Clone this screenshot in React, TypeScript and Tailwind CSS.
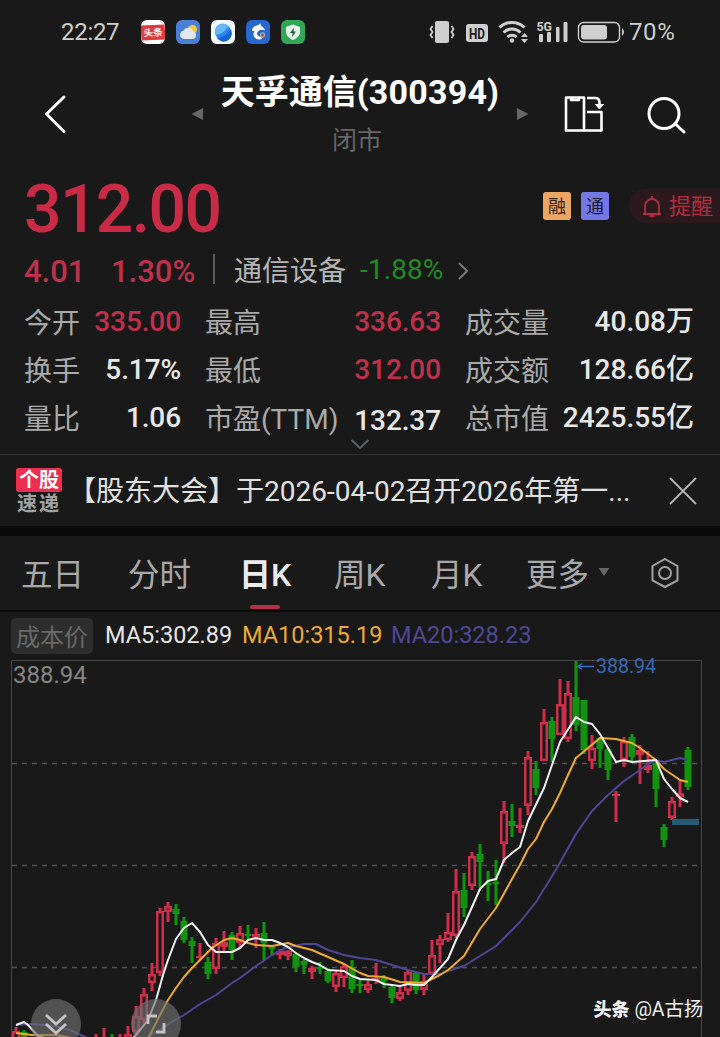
import React from 'react';

type Candle = [color: 'r' | 'g', high: number, top: number, bottom: number, low: number];

// one candle every 8px, the first one sits at x = 16
const leftCandles: Candle[] = [
  ['r', 1027, 1031, 1040, 1042], ['g', 1030, 1032, 1040, 1042],
];

const candles: Candle[] = [
  ['r', 1034, 1040, 1044, 1046], ['r', 1028, 1040, 1044, 1046], ['g', 1034, 1040, 1044, 1046],
  ['r', 1034, 1040, 1044, 1046], ['r', 1026, 1034, 1040, 1044], ['r', 1006, 1016, 1032, 1036],
  ['r', 988, 994, 1020, 1024], ['r', 963, 974, 983, 991], ['r', 908, 911, 973, 976],
  ['r', 902, 906, 912, 922], ['g', 904, 909, 914, 925], ['g', 917, 921, 940, 943],
  ['g', 937, 941, 946, 963], ['r', 943, 956, 958, 960], ['g', 957, 962, 974, 979],
  ['r', 938, 943, 969, 974], ['r', 931, 942, 947, 953], ['g', 932, 935, 950, 960],
  ['r', 926, 933, 943, 949], ['g', 925, 934, 936, 940], ['r', 928, 934, 937, 948],
  ['g', 922, 933, 943, 960], ['g', 945, 947, 949, 956], ['r', 949, 951, 955, 959],
  ['r', 950, 951, 956, 960], ['g', 953, 954, 967, 972], ['g', 959, 961, 965, 974],
  ['r', 966, 968, 972, 979], ['g', 962, 967, 969, 974], ['g', 968, 971, 981, 983],
  ['r', 970, 973, 987, 992], ['r', 963, 966, 978, 987], ['g', 960, 967, 989, 993],
  ['g', 980, 984, 986, 993], ['r', 981, 984, 990, 993], ['r', 963, 978, 980, 984],
  ['g', 975, 978, 981, 988], ['g', 986, 987, 998, 1003], ['r', 987, 992, 999, 1001],
  ['r', 970, 972, 991, 995], ['g', 972, 973, 990, 994], ['r', 974, 981, 990, 995],
  ['r', 940, 955, 974, 975], ['r', 935, 939, 945, 963], ['r', 913, 932, 940, 942],
  ['r', 869, 891, 936, 938], ['g', 873, 890, 908, 917], ['r', 852, 856, 886, 890],
  ['g', 844, 854, 862, 888], ['g', 871, 883, 885, 901], ['g', 860, 882, 884, 905],
  ['r', 801, 811, 844, 863], ['g', 804, 821, 826, 837], ['r', 808, 825, 828, 833],
  ['r', 751, 757, 806, 815], ['g', 761, 769, 788, 795], ['r', 709, 722, 761, 761],
  ['g', 717, 721, 739, 762], ['r', 679, 704, 735, 735], ['r', 681, 693, 739, 742],
  ['g', 661, 697, 725, 731], ['g', 700, 700, 750, 754], ['r', 735, 748, 761, 769],
  ['g', 737, 738, 749, 768], ['g', 748, 749, 770, 780], ['r', 791, 794, 796, 822],
  ['r', 737, 741, 760, 767], ['g', 734, 737, 757, 762], ['r', 745, 750, 755, 784],
  ['r', 751, 765, 770, 773], ['g', 760, 764, 789, 807], ['g', 824, 827, 840, 847],
  ['r', 797, 801, 818, 820], ['r', 781, 793, 797, 807], ['g', 747, 750, 787, 790],
];

const ma5 =
  '16,1025 24,1022 28,1025 38,1036 60,1042 130,1042 140,1030 148,1020 156,1000 163,975 168,960 176,939 184,928 192,923 200,932 208,945 216,952 232,952 240,948 248,940 256,938 264,940 272,940 280,943 288,947 296,953 304,958 312,962 320,965 328,970 344,971 352,976 360,979 376,980 384,984 392,985 400,986 408,984 416,985 424,985 432,977 440,968 448,959 456,940 464,925 480,889 488,881 496,879 504,860 512,853 520,847 528,821 544,788 552,765 560,742 576,717 584,722 592,724 600,734 616,762 624,760 632,762 656,760 664,779 672,789 680,798 688,802';
const ma10 =
  '16,1033 32,1035 56,1035 72,1038 90,1042 146,1042 152,1031 160,1015 168,1000 176,988 184,977 192,968 200,960 212,948 224,940 232,938 240,940 248,943 256,945 272,946 288,943 296,946 312,950 328,957 344,964 360,973 368,976 384,977 400,982 424,983 440,975 448,970 464,956 480,929 496,908 512,879 520,865 528,849 536,839 544,822 552,809 560,793 568,775 576,758 600,738 616,739 632,743 640,748 656,760 664,769 680,780 688,782';
const ma20 =
  '16,1025 32,1024 56,1026 72,1031 85,1037 100,1042 140,1042 156,1032 175,1020 184,1015 200,1004 216,995 232,983 240,978 256,966 272,955 288,947 304,944 316,944 328,950 344,955 360,958 376,960 392,965 408,970 424,974 440,974 448,971 464,966 480,956 496,946 520,922 536,902 557,868 576,834 592,811 608,795 624,781 640,770 648,764 656,760 664,762 680,758 688,760';

const CandleShape: React.FC<{ x: number; candle: Candle }> = ({ x, candle }) => {
  const [color, high, top, bottom, low] = candle;
  if (color === 'g') {
    return (
      <g fill="#129310">
        <rect x={x - 1.5} y={high} width={3} height={low - high} />
        <rect x={x - 3.5} y={top} width={7} height={bottom - top} />
      </g>
    );
  }
  return (
    <g fill="#cb2f4a">
      <rect x={x - 1.5} y={high} width={3} height={top - high + 1} />
      <rect x={x - 1.5} y={bottom - 1} width={3} height={low - bottom + 1} />
      <rect x={x - 4} y={top} width={8} height={bottom - top} />
      {bottom - top > 5 && <rect x={x - 1.5} y={top + 2.5} width={3} height={bottom - top - 5} fill="#191919" />}
    </g>
  );
};

const StatusBar = () => (
  <div className="flex h-[64px] shrink-0 items-center pl-[61px] text-[24px] leading-none text-[#cfcfcf]">
    <span className="w-[80px] tracking-[-0.3px]">22:27</span>
    <div className="flex gap-[11px]">
      <div className="flex h-6 w-6 items-center overflow-hidden rounded-[6px] bg-white">
        <div className="flex h-[15px] w-6 shrink-0 -rotate-3 items-center justify-center bg-[#e2393f] text-[9.5px] font-bold whitespace-nowrap text-white">头条</div>
      </div>
      <svg width="24" height="24" viewBox="0 0 24 24">
        <rect width="24" height="24" rx="6" fill="#4a7fd6" />
        <circle cx="16.500" cy="9.500" r="4.500" fill="#f8c83c" />
        <path d="M8 19a4.200 4.200 0 0 1-.6-8.300 5.200 5.200 0 0 1 9.600.8 3.800 3.800 0 0 1-.5 7.500z" fill="#dfe6ee" />
      </svg>
      <svg width="24" height="24" viewBox="0 0 24 24">
        <rect width="24" height="24" rx="6" fill="#f4f9ff" />
        <circle cx="12" cy="12" r="8" fill="#2f86ea" />
        <path d="M4.500 15C9 15 15 11 17.500 6A8 8 0 0 0 4.500 15z" fill="#65b6f7" />
        <path d="M6 18c6 0 11-4 13.500-9a8 8 0 0 1-13.500 9z" fill="#1763cf" />
      </svg>
      <svg width="24" height="24" viewBox="0 0 24 24">
        <rect width="24" height="24" rx="6" fill="#2468d0" />
        <path d="M6 11C6 7 9.500 5.500 12 5.200L14.500 3.500 15 6c2 1 3.500 2.500 4 4.500-1.500-1-3.500-1-5-.5-2.500 1-3.500 3-2.500 5 .8 1.500 2.500 2 4 1.500l.5 2.500c-4 1.500-8-.5-8.500-4.500-.1-1.500.3-2.500 1-3.500z" fill="#fff" />
        <circle cx="16.500" cy="15" r="2" fill="none" stroke="#c9a08a" strokeWidth="1.300" />
      </svg>
      <svg width="24" height="24" viewBox="0 0 24 24">
        <rect width="24" height="24" rx="6" fill="#31a856" />
        <path d="M12 4.500l7 2.500v5c0 4-3.500 6.500-7 8-3.500-1.500-7-4-7-8V7z" fill="#e6f6ea" />
        <path d="M13 7.500l-4 5.500h2.500L11 17l4-5.500h-2.500z" fill="#27613a" />
      </svg>
    </div>
    <svg className="ml-[124px] shrink-0" width="192" height="28" viewBox="429 18 192 28" fill="#cfcfcf">
      <rect x="435" y="21" width="14" height="22" rx="2" />
      <path d="M432.500 26l-2 3 2 3-2 3 2 3M451.500 26l2 3-2 3 2 3-2 3" fill="none" stroke="#cfcfcf" strokeWidth="1.800" />
      <rect x="466" y="24" width="22" height="18" rx="3" />
      <text x="477" y="38.500" textAnchor="middle" fontSize="15" fontWeight="700" fill="#191919" textLength="16" lengthAdjust="spacingAndGlyphs">HD</text>
      <path d="M499.500 27.500a18 18 0 0 1 25 0M503.500 32.500a12 12 0 0 1 17 0M507.500 37a6.500 6.500 0 0 1 9 0" fill="none" stroke="#cfcfcf" strokeWidth="3" />
      <circle cx="512" cy="40.500" r="2.200" />
      <path d="M521 37l3.500-4 3.500 4zM521 39h7l-3.500 4z" />
      <text x="536.500" y="31" fontSize="13" fontWeight="700" textLength="15.500" lengthAdjust="spacingAndGlyphs">5G</text>
      <rect x="539" y="34" width="4" height="8" rx="1" />
      <rect x="547" y="32" width="4" height="10" rx="1" />
      <rect x="556" y="27" width="3.500" height="15" rx="1" />
      <rect x="563.500" y="22" width="4" height="20" rx="1" />
      <rect x="578.500" y="22.500" width="41" height="19.500" rx="5" fill="none" stroke="#cfcfcf" strokeWidth="1.400" />
      <rect x="581" y="25" width="26" height="14.500" rx="3" />
    </svg>
    <svg className="ml-[1px]" width="3" height="8" viewBox="0 0 3 8">
      <path d="M0 0q4 4 0 8z" fill="#cfcfcf" />
    </svg>
    <span className="ml-[4px] tracking-[0.6px]">70%</span>
  </div>
);

const Header = () => (
  <div className="flex h-[100px] shrink-0 text-white">
    <svg className="mt-[28px] ml-[40px]" width="30" height="44" viewBox="0 0 30 44" fill="none" stroke="#fff" strokeWidth="3" strokeLinecap="round" strokeLinejoin="round">
      <path d="M24 5L6.500 22 24 39.500" />
    </svg>
    <svg className="mt-[43px] ml-[121px]" width="13" height="14" viewBox="0 0 13 14">
      <path d="M0.500 7L12 1v12z" fill="#666" />
    </svg>
    <div className="ml-[16px] flex w-[280px] flex-col items-center">
      <div className="mt-[9px] text-[34px] font-bold leading-[38px] whitespace-nowrap">
        天孚通信<span className="tracking-[0.2px]">(300394)</span>
      </div>
      <div className="mt-[16px] pr-[6px] text-[25px] leading-[28px] text-[#666]">闭市</div>
    </div>
    <svg className="mt-[43px] ml-[16px]" width="13" height="14" viewBox="0 0 13 14">
      <path d="M12.500 7L1 1v12z" fill="#666" />
    </svg>
    <svg className="mt-[30px] ml-[34px]" width="42" height="40" viewBox="563 94 42 40" fill="none" stroke="#fff" strokeWidth="2.600" strokeLinejoin="round">
      <path d="M566 97.500h18v33h-18zM584 130.500h17.500v-18.500H587" />
      <path d="M571 98v2h8v-2" />
      <path d="M587 98h8q4.500 0 4.500 4.500v4" />
      <path d="M595.500 104.500l4 4.500 4-4.500z" fill="#fff" strokeWidth="1" />
    </svg>
    <svg className="mt-[30px] ml-[42px]" width="42" height="42" viewBox="647 94 42 42" fill="none" stroke="#fff" strokeWidth="3" strokeLinecap="round">
      <circle cx="664" cy="113.500" r="15" />
      <path d="M675.500 124l8.500 8" />
    </svg>
  </div>
);

const stats = [
  ['今开', '335.00', true, '最高', '336.63', true, '成交量', '40.08万'],
  ['换手', '5.17%', false, '最低', '312.00', true, '成交额', '128.66亿'],
  ['量比', '1.06', false, '市盈(TTM)', '132.37', false, '总市值', '2425.55亿'],
] as const;

const Quote = () => (
  <div className="flex h-[291px] shrink-0 flex-col border-b border-[#333] pl-[24px]">
    <div className="flex h-[82px] items-center pt-[2px]">
      <span className="mt-[8px] w-[519px] text-[66px] font-medium leading-none tracking-[-1.6px] text-[#c92b46]">312.00</span>
      <span className="flex h-7 w-7 items-center justify-center rounded-[3px] bg-[#eda563] pt-px text-[18px] text-[#2e2013]">融</span>
      <span className="ml-[10px] flex h-7 w-7 items-center justify-center rounded-[3px] bg-[#7478e4] pt-px text-[18px] text-[#17183a]">通</span>
      <div className="ml-[20px] flex h-[34px] flex-1 items-center rounded-l-full bg-[#2b191d] pl-[12px] text-[22px] text-[#b42c42]">
        <svg width="22" height="24" viewBox="0 0 22 24" fill="none" stroke="#b42c42" strokeWidth="1.800">
          <path d="M2 20h18M4 20v-8a7 7 0 0 1 14 0v8M11 5V2M8.500 22h5" />
        </svg>
        <span className="ml-[6px] pt-[2px] leading-none whitespace-nowrap">提醒</span>
      </div>
    </div>
    <div className="flex h-[50px] items-center text-[28px] leading-none">
      <span className="w-[87px] text-[31px] font-medium text-[#c0304a]">4.01</span>
      <span className="w-[102px] text-[31px] font-medium text-[#c0304a]">1.30%</span>
      <span className="-mt-[4px] h-[30px] w-[2px] bg-[#5c5c5c]" />
      <span className="ml-[19px] pt-[2px] text-[#b4b4b4]">通信设备</span>
      <span className="ml-[14px] -mt-[3px] tracking-[0.1px] text-[#1f8c22]">-1.88%</span>
      <svg className="ml-[14px]" width="14" height="20" viewBox="0 0 14 20" fill="none" stroke="#777" strokeWidth="2">
        <path d="M2 2l8 8-8 8" />
      </svg>
    </div>
    <div className="flex flex-col pt-[2px] text-[28px] leading-none">
      {stats.map(([a, av, ared, b, bv, bred, c, cv]) => (
        <div key={a} className="flex h-[48px] items-center">
          <span className="w-[57px] pt-[3px] text-[#a9a9a9]">{a}</span>
          <span className={`w-[100px] text-right font-medium tracking-[-0.1px] ${ared ? 'text-[#c0304a]' : 'text-[#e8e8e8]'}`}>{av}</span>
          <span className="ml-[24px] w-[134px] pt-[3px] whitespace-nowrap text-[#a9a9a9]">{b}</span>
          <span className={`w-[102px] text-right font-medium tracking-[-0.1px] ${bred ? 'text-[#c0304a]' : 'pt-[6px] text-[#e8e8e8]'}`}>{bv}</span>
          <span className="ml-[24px] w-[84px] pt-[3px] text-[#a9a9a9]">{c}</span>
          <span className="w-[145px] text-right font-medium whitespace-nowrap text-[#e8e8e8]">{cv}</span>
        </div>
      ))}
    </div>
    <svg className="-mt-[5px] ml-[326px]" width="20" height="14" viewBox="0 0 20 14" fill="none" stroke="#56616c" strokeWidth="2">
      <path d="M1.500 3l8.500 8 8.500-8" />
    </svg>
  </div>
);

const Notice = () => (
  <div className="flex h-[71px] shrink-0 items-center pl-[16px]">
    <div className="flex w-[46px] flex-col items-center pt-px text-[20px] font-bold">
      <span className="flex h-[24px] w-[46px] items-center justify-center rounded-[3px] bg-[#ee2e50] leading-none text-white">个股</span>
      <span className="h-[22px] pt-px text-[20px] leading-[22px] tracking-[2px] text-[#a2a2a2]">速递</span>
    </div>
    <span className="ml-[6px] w-[580px] truncate pt-[2px] text-[28px] leading-[36px] text-[#e2e2e2]">【股东大会】于2026-04-02召开2026年第一...</span>
    <svg className="ml-[21px]" width="28" height="28" viewBox="0 0 28 28" stroke="#b5b5b5" strokeWidth="1.800">
      <path d="M1 1l26 26M27 1L1 27" />
    </svg>
  </div>
);

const Tabs = () => (
  <div className="flex h-[76px] shrink-0 border-b-2 border-[#0b0b0b] pl-[21px] text-[31.5px] leading-[79px] text-[#a9a9a9]">
    <span className="w-[107px]">五日</span>
    <span className="w-[109px]">分时</span>
    <div className="flex w-[56px] flex-col items-center font-bold text-[#ececec]">
      <span className="h-[69px] text-[32px] whitespace-nowrap">日<span className="font-medium">K</span></span>
      <span className="h-[4px] w-[30px] rounded-full bg-[#b53148]" />
    </div>
    <span className="ml-[41px] w-[97px]">周K</span>
    <span className="w-[95px]">月K</span>
    <span className="w-[63px]">更多</span>
    <svg className="mt-[31px] ml-[9px]" width="12" height="10" viewBox="0 0 12 10">
      <path d="M0.500 1h11L6 9z" fill="#666" />
    </svg>
    <svg className="mt-[21px] ml-[40px]" width="30" height="32" viewBox="0 0 30 32" fill="none" stroke="#a2a2a2" strokeWidth="2">
      <path d="M15 2l12.500 7v14.500L15 30 2.500 23.500V9z" />
      <circle cx="15" cy="16" r="6" />
    </svg>
  </div>
);

const Legend = () => (
  <div className="flex h-[48px] shrink-0 items-center pl-[11px] text-[23.500px] leading-none">
    <span className="flex h-[36px] w-[82px] items-center justify-center rounded-[5px] bg-[#2d2d2d] pt-[3px] text-[24px] whitespace-nowrap text-[#696969]">成本价</span>
    <span className="ml-[12px] w-[137px] text-[#e6e6e6]">MA5:302.89</span>
    <span className="w-[149px] text-[#eeaa30]">MA10:315.19</span>
    <span className="text-[#504895]">MA20:328.23</span>
  </div>
);

const Chart = () => (
  <div className="relative h-[377px] shrink-0">
    <svg className="overflow-visible" width="720" height="377" viewBox="0 660 720 377" fill="none">
      <path d="M11.500 1040V660.500h690V1040" stroke="#484848" />
      <path d="M12 763.500h690M12 865.500h690M12 967.500h690" stroke="#505050" strokeWidth="1.500" strokeDasharray="5 5" />
      <text x="13" y="683" fontSize="24" fill="#858585">388.94</text>
      {leftCandles.map((c, i) => <CandleShape key={i} x={16 + i * 8} candle={c} />)}
      {candles.map((c, i) => <CandleShape key={i} x={96 + i * 8} candle={c} />)}
      <rect x="672" y="819" width="27" height="6" fill="#275a73" />
      <polyline points={ma20} stroke="#4e4696" strokeWidth="2" strokeLinejoin="round" />
      <polyline points={ma10} stroke="#f0ab31" strokeWidth="2" strokeLinejoin="round" />
      <polyline points={ma5} stroke="#f2f2f2" strokeWidth="2" strokeLinejoin="round" />
      <path d="M578 666.500h16M582 663.500l-4 3 4 3" stroke="#356bc0" strokeWidth="1.500" />
      <text x="596" y="673" fontSize="19.500" fill="#3768b9">388.94</text>
    </svg>
    <div className="absolute top-[339px] left-[31px] flex h-[50px] w-[50px] items-center justify-center rounded-full bg-[#707070]/65">
      <svg width="24" height="24" viewBox="0 0 24 24" fill="none" stroke="#c4c4c4" strokeWidth="2.800">
        <path d="M2 3l10 9 10-9M2 12l10 9 10-9" />
      </svg>
    </div>
    <div className="absolute top-[339px] left-[131px] flex h-[50px] w-[50px] items-center justify-center rounded-full bg-[#707070]/65">
      <svg width="20" height="20" viewBox="0 0 20 20" fill="none" stroke="#c4c4c4" strokeWidth="2.800">
        <path d="M2 10V2h9M10 18h8V9" />
      </svg>
    </div>
    <div className="absolute top-[338px] right-[17px] flex text-[18px] leading-[24px] whitespace-nowrap text-[#f0f0f0]">
      <span className="font-black">头条</span>
      <span className="ml-[5px] text-[19.500px] tracking-[-0.2px]">@A古扬</span>
    </div>
  </div>
);

const App: React.FC = () => {
  return (
    <div className="flex h-[1037px] w-[720px] flex-col overflow-hidden bg-[#191919] font-['Roboto','Noto_Sans_CJK_SC',sans-serif]">
      <StatusBar />
      <Header />
      <Quote />
      <Notice />
      <div className="h-[10px] shrink-0 bg-[#0a0a0a]" />
      <Tabs />
      <Legend />
      <Chart />
    </div>
  );
};

export default App;
